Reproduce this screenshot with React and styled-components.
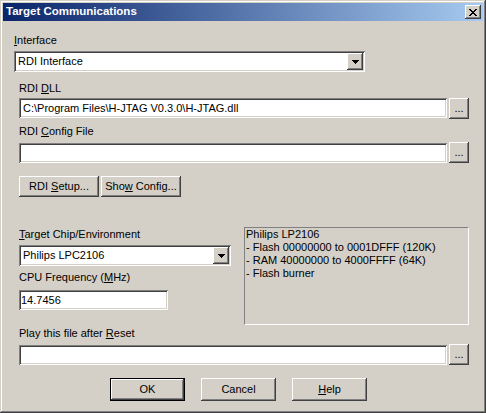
import React from "react";
import styled, { createGlobalStyle, css } from "styled-components";

const FACE = "#d4d0c8";

const GlobalStyle = createGlobalStyle`
  html, body {
    margin: 0;
    padding: 0;
    background: ${FACE};
  }
  body {
    font-family: "Liberation Sans", Arial, sans-serif;
    font-size: 11px;
    color: #000;
  }
`;

const raised = css`
  box-shadow: inset -1px -1px #404040, inset 1px 1px #fff,
    inset -2px -2px #808080, inset 2px 2px ${FACE};
`;

const sunken = css`
  box-shadow: inset 1px 1px #808080, inset -1px -1px #fff,
    inset 2px 2px #404040, inset -2px -2px ${FACE};
`;

const Window = styled.div`
  box-sizing: border-box;
  width: 486px;
  height: 413px;
  padding: 3px;
  background: ${FACE};
  box-shadow: inset -1px -1px #404040, inset 1px 1px ${FACE},
    inset -2px -2px #808080, inset 2px 2px #fff;
  display: flex;
  flex-direction: column;
`;

const TitleBar = styled.div`
  height: 18px;
  flex: none;
  display: flex;
  align-items: center;
  justify-content: space-between;
  padding: 0 2px 0 3px;
  background: linear-gradient(to right, #0a246a, #a6caf0);
`;

const Title = styled.span`
  color: #fff;
  font-weight: bold;
  font-size: 11.5px;
  line-height: 13px;
  margin-top: -1px;
`;

const CloseButton = styled.div`
  width: 16px;
  height: 14px;
  background: ${FACE};
  ${raised};
  display: flex;
  align-items: center;
  justify-content: center;
`;

const Content = styled.div`
  display: flex;
  flex-direction: column;
  padding-left: 11px;
`;

const Label = styled.div`
  height: 13px;
  line-height: 13px;
  white-space: nowrap;
  margin-top: ${(p) => p.$mt || 0}px;
  margin-left: ${(p) => (p.$indent ? 5 : 0)}px;
`;

const Combo = styled.div`
  box-sizing: border-box;
  width: ${(p) => p.$w}px;
  height: 21px;
  margin-top: ${(p) => p.$mt || 0}px;
  margin-left: ${(p) => (p.$indent ? 5 : 0)}px;
  padding: 2px;
  background: #fff;
  ${sunken};
  display: flex;
  align-items: center;
`;

const ComboText = styled.span`
  flex: 1;
  padding-left: 2px;
  line-height: 13px;
  white-space: nowrap;
`;

const DropButton = styled.div`
  width: 16px;
  height: 17px;
  background: ${FACE};
  ${raised};
  display: flex;
  align-items: center;
  justify-content: center;
`;

const FieldRow = styled.div`
  display: flex;
  align-items: flex-start;
  gap: 2px;
  margin-top: ${(p) => p.$mt || 0}px;
  margin-left: 5px;
`;

const Edit = styled.div`
  box-sizing: border-box;
  width: ${(p) => p.$w}px;
  height: 20px;
  margin-top: ${(p) => p.$mt || 0}px;
  padding-left: ${(p) => p.$pad ?? 4}px;
  background: #fff;
  ${sunken};
  display: flex;
  align-items: center;
  line-height: 13px;
  white-space: nowrap;
`;

const EllipsisButton = styled.div`
  width: 20px;
  height: 21px;
  background: ${FACE};
  ${raised};
  display: flex;
  align-items: center;
  justify-content: center;
  line-height: 13px;
  padding-bottom: 1px;
  box-sizing: border-box;
`;

const ButtonRow = styled.div`
  display: flex;
  gap: ${(p) => p.$gap}px;
  margin-top: ${(p) => p.$mt || 0}px;
  padding-left: ${(p) => p.$pl || 0}px;
`;

const PushButton = styled.div`
  box-sizing: border-box;
  width: ${(p) => p.$w}px;
  height: ${(p) => p.$h}px;
  background: ${FACE};
  ${(p) =>
    p.$default
      ? css`
          box-shadow: inset 0 0 0 1px #000, inset -2px -2px #404040,
            inset 2px 2px #fff, inset -3px -3px #808080;
        `
      : raised};
  display: flex;
  align-items: center;
  justify-content: center;
  line-height: 13px;
  white-space: nowrap;
`;

const Lower = styled.div`
  display: flex;
  gap: 13px;
  margin-top: 30px;
  margin-left: 5px;
`;

const LeftColumn = styled.div`
  width: 212px;
  display: flex;
  flex-direction: column;
`;

const InfoBox = styled.div`
  box-sizing: border-box;
  width: 225px;
  height: 98px;
  padding: 0 1px;
  border-top: 1px solid #808080;
  border-left: 1px solid #808080;
  border-bottom: 1px solid #fff;
  border-right: 1px solid #fff;
  line-height: 13px;
  white-space: nowrap;
`;

const Arrow = () => (
  <svg width="7" height="4" viewBox="0 0 7 4" shapeRendering="crispEdges">
    <path d="M0 0H7V1H6V2H5V3H4V4H3V3H2V2H1V1H0Z" fill="#000" />
  </svg>
);

const CloseGlyph = () => (
  <svg width="8" height="7" viewBox="0 0 8 7" shapeRendering="crispEdges">
    <path
      fill="#000"
      d="M0 0h2v1H0zM6 0h2v1H6zM1 1h2v1H1zM5 1h2v1H5zM2 2h4v1H2zM3 3h2v1H3zM2 4h4v1H2zM1 5h2v1H1zM5 5h2v1H5zM0 6h2v1H0zM6 6h2v1H6z"
    />
  </svg>
);

const infoLines = [
  "Philips LP2106",
  "- Flash 00000000 to 0001DFFF (120K)",
  "- RAM 40000000 to 4000FFFF (64K)",
  "- Flash burner",
];

export default function App() {
  return (
    <>
      <GlobalStyle />
      <Window>
        <TitleBar>
          <Title>Target Communications</Title>
          <CloseButton>
            <CloseGlyph />
          </CloseButton>
        </TitleBar>
        <Content>
          <Label $mt={13}>
            <u>I</u>nterface
          </Label>
          <Combo $w={351} $mt={4}>
            <ComboText>RDI Interface</ComboText>
            <DropButton>
              <Arrow />
            </DropButton>
          </Combo>

          <Label $mt={10} $indent>
            RDI <u>D</u>LL
          </Label>
          <FieldRow $mt={3}>
            <Edit $w={428}>C:\Program Files\H-JTAG V0.3.0\H-JTAG.dll</Edit>
            <EllipsisButton>...</EllipsisButton>
          </FieldRow>

          <Label $mt={6} $indent>
            RDI <u>C</u>onfig File
          </Label>
          <FieldRow $mt={4}>
            <Edit $w={428} $mt={1} />
            <EllipsisButton>...</EllipsisButton>
          </FieldRow>

          <FieldRow $mt={13}>
            <PushButton $w={80} $h={21}>
              RDI&nbsp;<u>S</u>etup...
            </PushButton>
            <PushButton $w={80} $h={21}>
              Sho<u>w</u>&nbsp;Config...
            </PushButton>
          </FieldRow>

          <Lower>
            <LeftColumn>
              <Label $mt={1}>
                <u>T</u>arget Chip/Environment
              </Label>
              <Combo $w={212} $mt={4}>
                <ComboText>Philips LPC2106</ComboText>
                <DropButton>
                  <Arrow />
                </DropButton>
              </Combo>
              <Label $mt={5}>
                CPU Frequency (<u>M</u>Hz)
              </Label>
              <Edit $w={149} $mt={6} $pad={2}>
                14.7456
              </Edit>
            </LeftColumn>
            <InfoBox>
              {infoLines.map((line) => (
                <div key={line}>{line}</div>
              ))}
            </InfoBox>
          </Lower>

          <Label $mt={2} $indent>
            Play this file after <u>R</u>eset
          </Label>
          <FieldRow $mt={4}>
            <Edit $w={428} $mt={1} />
            <EllipsisButton>...</EllipsisButton>
          </FieldRow>

          <ButtonRow $mt={13} $pl={96} $gap={16}>
            <PushButton $w={75} $h={23} $default>
              OK
            </PushButton>
            <PushButton $w={75} $h={23}>
              Cancel
            </PushButton>
            <PushButton $w={75} $h={23}>
              <u>H</u>elp
            </PushButton>
          </ButtonRow>
        </Content>
      </Window>
    </>
  );
}
